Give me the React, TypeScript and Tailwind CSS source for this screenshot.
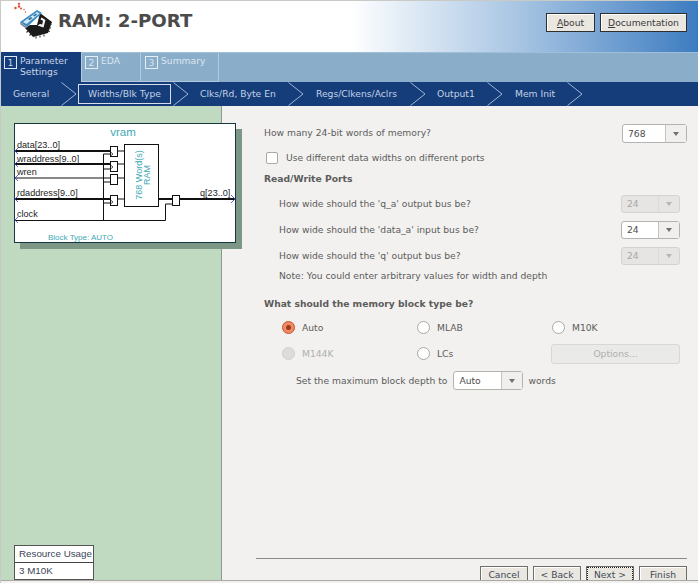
type SelectProps = {
  value: string
  className: string
  disabled?: boolean
}

function Select({ value, className, disabled }: SelectProps) {
  return (
    <div
      className={`flex items-stretch rounded-[3px] border shrink-0 ${className} ${
        disabled ? 'border-[#d4d3d0] bg-[#e6e5e3] text-[#a8a8a6]' : 'border-[#b4b3af] bg-white text-[#4c4c4c]'
      }`}
    >
      <span className="flex-1 flex items-center pl-[5px]">{value}</span>
      <span
        className={`w-[21px] flex items-center justify-center border-l ${
          disabled ? 'border-[#dcdbd8]' : 'border-[#c4c3bf] bg-[#f0efed]'
        }`}
      >
        <span
          className={`w-0 h-0 border-x-[3.5px] border-x-transparent border-t-[4px] ${
            disabled ? 'border-t-[#b5b5b3]' : 'border-t-[#707070]'
          }`}
        />
      </span>
    </div>
  )
}

function Radio({ label, on, disabled, width }: { label: string; on?: boolean; disabled?: boolean; width: string }) {
  return (
    <div className={`flex items-center gap-[7px] ${width} ${disabled ? 'text-[#b0b0ae]' : ''}`}>
      <span
        className={`w-[13px] h-[13px] rounded-full border flex items-center justify-center shrink-0 ${
          on
            ? 'border-[#c9532c] bg-[#ef8a66]'
            : disabled
              ? 'border-[#cfcecb] bg-[#dddcda]'
              : 'border-[#a9a8a4] bg-white'
        }`}
      >
        {on && <span className="w-[5px] h-[5px] rounded-full bg-[#9e3a17]" />}
      </span>
      {label}
    </div>
  )
}

function HeadButton({ mnemonic, rest, width }: { mnemonic: string; rest: string; width: string }) {
  return (
    <div
      className={`${width} h-[19px] flex items-center justify-center border border-[#2e2e2e] bg-[#e9e7e0] text-[#3a3a3a] shadow-[inset_1px_1px_0_#fff]`}
    >
      <span>
        <span className="underline">{mnemonic}</span>
        {rest}
      </span>
    </div>
  )
}

function WizardButton({ label, focused }: { label: string; focused?: boolean }) {
  return (
    <div className="w-[48px] h-[14px] flex items-start justify-center border-t border-x border-[#6e6e6a] bg-[#e9e7e0] text-[#3f4a58] shadow-[inset_1px_1px_0_#fff]">
      <span
        className={`h-full w-full flex items-center justify-center pt-[2px] ${
          focused ? 'border-t border-x border-dotted border-[#222]' : ''
        }`}
      >
        {label}
      </span>
    </div>
  )
}

function Chevron() {
  return (
    <svg width="16" height="24" viewBox="0 0 16 24" className="block shrink-0">
      <path d="M0.5 0.5L15 12L0.5 23.5" fill="none" stroke="#9fb6d4" strokeWidth="1" />
    </svg>
  )
}

function ChipIcon() {
  return (
    <svg width="44" height="40" viewBox="10 1 44 40" className="block">
      {/* red sparks */}
      <g fill="#e0452f">
        <circle cx="15.5" cy="8" r="1.2" />
        <circle cx="19" cy="6.5" r="1.2" />
        <circle cx="19" cy="3.8" r="1.1" />
        <circle cx="21" cy="8.5" r="1" />
        <circle cx="24" cy="9.5" r="0.7" />
        <circle cx="25.5" cy="12" r="0.7" />
      </g>
      {/* chip body */}
      <path d="M40 13L52 22L48 33L33 37L25 28L30 25L37 25Z" fill="#1b1b1b" />
      <path
        d="M28 31L26.5 32.5M31 34L29.5 35.5M36 36.5L36 38.5M40 35.5L40 37.5M44 34.5L44 36.5M49.5 24L51.5 24.5M49 27.5L51 28M48 31L50 31.5"
        stroke="#333"
        strokeWidth="1.1"
      />
      {/* white notch */}
      <path d="M41.5 17.5L45.5 20L43.5 27.5L37.5 25.5L40 24L42.2 24.6L43 20.8L40.5 19.5Z" fill="#f5f5f5" />
      {/* card lying on the chip */}
      <path d="M20 22L37 10L42 13L27 27Z" fill="#3a8bc6" />
      <path d="M23 22L37 12L39.5 13.5L26.5 24Z" fill="#d4e9f5" />
      <path d="M28 19L31 17L32.5 18L29.5 20.2ZM33 15.5L36 13.5L37 14.5L34.5 16.5Z" fill="#2f6f9f" />
      <path d="M20 22L27 27L26 28.5L20.5 24.5Z" fill="#7e8a92" />
    </svg>
  )
}

function Diagram() {
  const teal = '#3fa9b5'
  const blue = '#3a3ad0'
  const regs = [
    [146, 151],
    [161, 164],
    [174, 178],
    [195, 199],
  ]
  return (
    <svg width="220" height="118" viewBox="15 124 220 118" className="block">
      <text x="123" y="136" textAnchor="middle" fontSize="11.5" fill={teal} fontFamily="Liberation Sans">
        vram
      </text>

      <g stroke="#111" fill="none">
        <path d="M14 151H110M14 164H110M14 199H110M158 199H172M179 199H235" strokeWidth="1.8" />
        <path d="M14 178H110M14 220.5H165.5V204H172M103.5 154V220M103.5 154H110M103.5 169H110M103.5 182H110M103.5 203H110" strokeWidth="1" />
        <path d="M117 151H124M117 164H124M117 178H124M117 199H124" strokeWidth="1.2" />
        <rect x="124.5" y="144.5" width="34" height="62" fill="#fff" strokeWidth="1" />
      </g>

      {regs.map(([top, mid]) => (
        <g key={top}>
          <rect x="110.5" y={top + 0.5} width="7" height="10" fill="#fff" stroke="#111" />
          {top !== 174 && <path d={`M110.5 ${mid + 1}l2.5 2l-2.5 2`} fill="none" stroke="#111" strokeWidth="0.7" />}
        </g>
      ))}
      <rect x="172.5" y="195.5" width="7" height="10" fill="#fff" stroke="#111" />

      <g fontSize="9.1" fill="#222" fontFamily="Liberation Sans">
        <text x="17" y="148">data[23..0]</text>
        <text x="17" y="162">wraddress[9..0]</text>
        <text x="17" y="175">wren</text>
        <text x="17" y="196">rdaddress[9..0]</text>
        <text x="17" y="217">clock</text>
        <text x="200" y="196">q[23..0]</text>
      </g>

      <g fontSize="9" fill={teal} fontFamily="Liberation Sans" textAnchor="middle">
        <text transform="translate(141.5 175) rotate(-90)">768 Word(s)</text>
        <text transform="translate(150 175) rotate(-90)">RAM</text>
      </g>

      <text x="48" y="240" fontSize="8" fill={teal} fontFamily="Liberation Sans">
        Block Type: AUTO
      </text>

      <g stroke={blue} fill="none" strokeWidth="0.8">
        <path d="M18 148L15 151L18 154M18 161L15 164L18 167M18 175L15 178L18 181M18 196L15 199L18 202M18 217L15 220L18 223" />
        <path d="M231 195L235 199L231 203" />
      </g>
    </svg>
  )
}

const navItems = [
  { label: 'General', width: 'w-[48px]', after: 'mr-[1px]' },
  { label: 'Widths/Blk Type', active: true, width: 'w-[93px]', after: 'ml-[2px] mr-[11px]' },
  { label: 'Clks/Rd, Byte En', width: 'w-[88px]', after: 'mr-[12px]' },
  { label: 'Regs/Clkens/Aclrs', width: 'w-[94px]', after: 'mr-[11px]' },
  { label: 'Output1', width: 'w-[50px]', after: 'mr-[12px]' },
  { label: 'Mem Init', width: 'w-[52px]', after: '' },
]

export default function App() {
  return (
    <div className="w-[698px] h-[583px] overflow-hidden flex flex-col bg-[#f2f1ef] border-t border-l border-[#c9c9c5] font-['DejaVu_Sans',sans-serif] text-[9.2px] text-[#5c5c5c]">
      {/* Header */}
      <div className="h-[51px] shrink-0 flex justify-between pr-[11px] bg-gradient-to-r from-white from-50% via-[#a5c3e2] via-75% to-[#3b7cc0]">
        <div className="flex items-start pl-[9px]">
          <ChipIcon />
          <div className="ml-[4px] mt-[9px] leading-[22px] text-[18.2px] font-bold text-[#4b4b4b]">RAM: 2-PORT</div>
        </div>
        <div className="flex gap-[5px] pt-[12px]">
          <HeadButton mnemonic="A" rest="bout" width="w-[49px]" />
          <HeadButton mnemonic="D" rest="ocumentation" width="w-[87px]" />
        </div>
      </div>

      {/* Steps */}
      <div className="h-[30px] shrink-0 flex bg-[#8aadc9] border-t border-[#a2bfd8] text-[#c9d6e6]">
        <div className="w-[80px] -mt-[1px] bg-[#153d7a] flex pl-[3px] pt-[4px] gap-[3px] leading-[11px]">
          <span className="w-[13px] h-[13px] border border-[#dfe7f2] flex items-center justify-center shrink-0">1</span>
          <span className="-mt-[1px]">
            Parameter
            <br />
            Settings
          </span>
        </div>
        <div className="w-[60px] flex pl-[3px] pt-[3px] gap-[3px] leading-[11px] border-x border-b border-[#b4cade] text-[#dbe5ef]">
          <span className="w-[13px] h-[13px] border border-[#e6edf4] flex items-center justify-center shrink-0">2</span>
          <span className="-mt-[1px]">EDA</span>
        </div>
        <div className="w-[78px] flex pl-[4px] pt-[3px] gap-[3px] leading-[11px] border-r border-b border-[#b4cade] text-[#dbe5ef]">
          <span className="w-[13px] h-[13px] border border-[#e6edf4] flex items-center justify-center shrink-0">3</span>
          <span className="-mt-[1px]">Summary</span>
        </div>
      </div>

      {/* Sub navigation */}
      <div className="h-[24px] shrink-0 flex items-center bg-[#153d7a] pl-[12px] text-[#c3d2e6]">
        {navItems.map((item) => (
          <div key={item.label} className="flex items-center">
            <div
              className={`${item.width} h-[20px] flex items-center whitespace-nowrap ${
                item.active ? 'justify-center border border-[#d5deea]' : ''
              }`}
            >
              {item.label}
            </div>
            <div className={item.after}>
              <Chevron />
            </div>
          </div>
        ))}
      </div>

      {/* Main */}
      <div className="flex-1 flex min-h-0 border-b border-[#a9a9a6] mb-[2px]">
        {/* Left pane */}
        <div className="w-[221px] shrink-0 bg-[#bfdac0] border-r border-[#8b9a8c] flex flex-col justify-between pl-[13px] pt-[17px]">
          <div className="relative w-[222px] h-[120px] border border-[#16383e] bg-white shadow-[6px_6px_0_#7c9785]">
            <Diagram />
          </div>
          <div className="w-[80px] border border-[#555] bg-white font-['Liberation_Sans',sans-serif] text-[9.8px] text-[#3c4654] whitespace-nowrap">
            <div className="h-[17px] flex items-center pl-[4px] border-b border-[#444]">Resource Usage</div>
            <div className="h-[16px] flex items-center pl-[4px]">3 M10K</div>
          </div>
        </div>

        {/* Right pane */}
        <div className="flex-1 min-w-0 flex flex-col pl-[42px] pr-[11px] pt-[18px]">
          <div className="h-[19px] flex items-center justify-between">
            <span className="-mt-[2px]">How many 24-bit words of memory?</span>
            <Select value="768" className="w-[65px] h-[19px]" />
          </div>

          <div className="h-[14px] mt-[8px] ml-[2px] flex items-center gap-[8px]">
            <span className="w-[12px] h-[12px] rounded-[2px] border border-[#a9a8a4] bg-white shrink-0" />
            Use different data widths on different ports
          </div>

          <div className="mt-[7px] h-[14px] flex items-center font-bold">Read/Write Ports</div>

          <div className="mt-[9px] pl-[15px] pr-[7px] flex flex-col gap-[8px]">
            <div className="h-[18px] flex items-center justify-between">
              <span>How wide should the 'q_a' output bus be?</span>
              <Select value="24" disabled className="w-[59px] h-[18px]" />
            </div>
            <div className="h-[18px] flex items-center justify-between">
              <span>How wide should the 'data_a' input bus be?</span>
              <Select value="24" className="w-[59px] h-[18px]" />
            </div>
            <div className="h-[18px] flex items-center justify-between">
              <span>How wide should the 'q' output bus be?</span>
              <Select value="24" disabled className="w-[59px] h-[18px]" />
            </div>
          </div>

          <div className="mt-[4px] ml-[15px] h-[14px] flex items-center">Note: You could enter arbitrary values for width and depth</div>

          <div className="mt-[14px] h-[14px] flex items-center font-bold">What should the memory block type be?</div>

          <div className="mt-[7px] pl-[18px] pr-[7px] h-[20px] flex items-center">
            <Radio label="Auto" on width="w-[135px]" />
            <Radio label="MLAB" width="w-[135px]" />
            <Radio label="M10K" width="w-[120px]" />
          </div>

          <div className="mt-[6px] pl-[18px] pr-[7px] h-[20px] flex items-center">
            <Radio label="M144K" disabled width="w-[135px]" />
            <Radio label="LCs" width="w-[134px]" />
            <div className="w-[129px] h-[20px] rounded-[3px] border border-[#d8d7d4] bg-[#eaeae8] text-[#b0b0ae] flex items-center justify-center">
              Options...
            </div>
          </div>

          <div className="mt-[7px] pl-[32px] h-[19px] flex items-center">
            <span>Set the maximum block depth to</span>
            <Select value="Auto" className="ml-[6px] w-[70px] h-[19px]" />
            <span className="ml-[5px]">words</span>
          </div>

          <div className="flex-1" />

          <div className="-ml-[8px] flex flex-col">
            <div className="h-[1px] bg-[#8a8a86]" />
            <div className="mt-[7px] flex justify-end gap-[5px]">
              <WizardButton label="Cancel" />
              <WizardButton label="< Back" />
              <WizardButton label="Next >" focused />
              <WizardButton label="Finish" />
            </div>
          </div>
        </div>
      </div>
    </div>
  )
}
